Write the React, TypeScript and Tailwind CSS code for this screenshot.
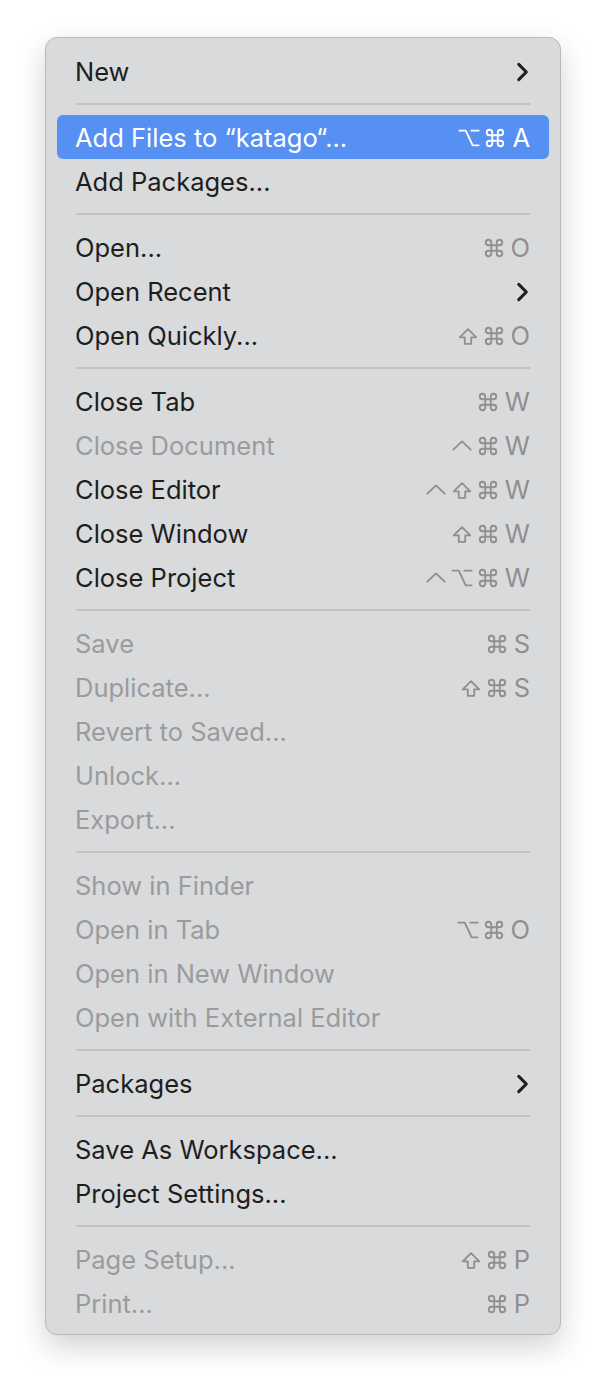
import React from "react";

type Key = "ctrl" | "opt" | "shift" | "cmd" | string;

type Item =
  | { sep: true }
  | {
      sep?: false;
      label: string;
      keys?: Key[];
      sub?: boolean;
      disabled?: boolean;
      active?: boolean;
    };

const items: Item[] = [
  { label: "New", sub: true },
  { sep: true },
  { label: "Add Files to \u201Ckatago\u201C...", keys: ["opt", "cmd", "A"], active: true },
  { label: "Add Packages..." },
  { sep: true },
  { label: "Open...", keys: ["cmd", "O"] },
  { label: "Open Recent", sub: true },
  { label: "Open Quickly...", keys: ["shift", "cmd", "O"] },
  { sep: true },
  { label: "Close Tab", keys: ["cmd", "W"] },
  { label: "Close Document", keys: ["ctrl", "cmd", "W"], disabled: true },
  { label: "Close Editor", keys: ["ctrl", "shift", "cmd", "W"] },
  { label: "Close Window", keys: ["shift", "cmd", "W"] },
  { label: "Close Project", keys: ["ctrl", "opt", "cmd", "W"] },
  { sep: true },
  { label: "Save", keys: ["cmd", "S"], disabled: true },
  { label: "Duplicate...", keys: ["shift", "cmd", "S"], disabled: true },
  { label: "Revert to Saved...", disabled: true },
  { label: "Unlock...", disabled: true },
  { label: "Export...", disabled: true },
  { sep: true },
  { label: "Show in Finder", disabled: true },
  { label: "Open in Tab", keys: ["opt", "cmd", "O"], disabled: true },
  { label: "Open in New Window", disabled: true },
  { label: "Open with External Editor", disabled: true },
  { sep: true },
  { label: "Packages", sub: true },
  { sep: true },
  { label: "Save As Workspace..." },
  { label: "Project Settings..." },
  { sep: true },
  { label: "Page Setup...", keys: ["shift", "cmd", "P"], disabled: true },
  { label: "Print...", keys: ["cmd", "P"], disabled: true },
];

const paths: Record<string, React.ReactNode> = {
  cmd: <path d="M15 6v12a3 3 0 1 0 3-3H6a3 3 0 1 0 3 3V6a3 3 0 1 0-3 3h12a3 3 0 1 0-3-3" />,
  opt: (
    <>
      <path d="M1.5 4h7l7.5 16h6.5" />
      <path d="M14.5 4h8" />
    </>
  ),
  shift: <path d="M8.5 20.5v-7H3L12 4.5l9 9h-5.5v7z" />,
  ctrl: <path d="M2.5 16l9.5-9 9.5 9" />,
};

function KeyGlyph({ k }: { k: Key }) {
  if (paths[k]) {
    return (
      <svg
        viewBox="0 0 24 24"
        className="w-[22px] h-[22px]"
        fill="none"
        stroke="currentColor"
        strokeWidth={2}
        strokeLinecap="round"
        strokeLinejoin="round"
      >
        {paths[k]}
      </svg>
    );
  }
  return <span className="ml-[2px] leading-none">{k}</span>;
}

function Chevron() {
  return (
    <svg
      viewBox="0 0 24 24"
      className="w-[26px] h-[26px] mr-[-5px]"
      fill="none"
      stroke="currentColor"
      strokeWidth={2.8}
      strokeLinecap="round"
      strokeLinejoin="round"
    >
      <path d="M9 5l7 7-7 7" />
    </svg>
  );
}

export default function App() {
  return (
    <div
      className="min-h-[1388px] w-full bg-white pt-[37px] pl-[45px]"
      style={{ fontFamily: "Inter, 'Noto Sans', sans-serif" }}
    >
      <div className="w-[516px] rounded-[12px] border border-[#b9b9bb] bg-[#d9dadc] px-[11px] pt-[11px] pb-[9px] shadow-[0_12px_30px_rgba(0,0,0,0.18)]">
        {items.map((it, i) =>
          it.sep ? (
            <div key={i} className="h-[22px] flex items-center px-[19px]">
              <div className="h-[2px] w-full bg-[#c2c2c4]" />
            </div>
          ) : (
            <div
              key={i}
              className={
                "h-[44px] flex items-center justify-between pl-[18px] pr-[19px] pt-[2px] rounded-[6px] text-[25.5px] " +
                (it.active
                  ? "bg-[#5690f3] text-white"
                  : it.disabled
                  ? "text-[#9b9b9d]"
                  : "text-[#1e1e1e]")
              }
            >
              <span>{it.label}</span>
              {it.sub && <Chevron />}
              {it.keys && (
                <span
                  className={
                    "flex items-center gap-[4px] " +
                    (it.active ? "text-white" : "text-[#8f8f91]")
                  }
                >
                  {it.keys.map((k, j) => (
                    <KeyGlyph key={j} k={k} />
                  ))}
                </span>
              )}
            </div>
          )
        )}
      </div>
    </div>
  );
}
